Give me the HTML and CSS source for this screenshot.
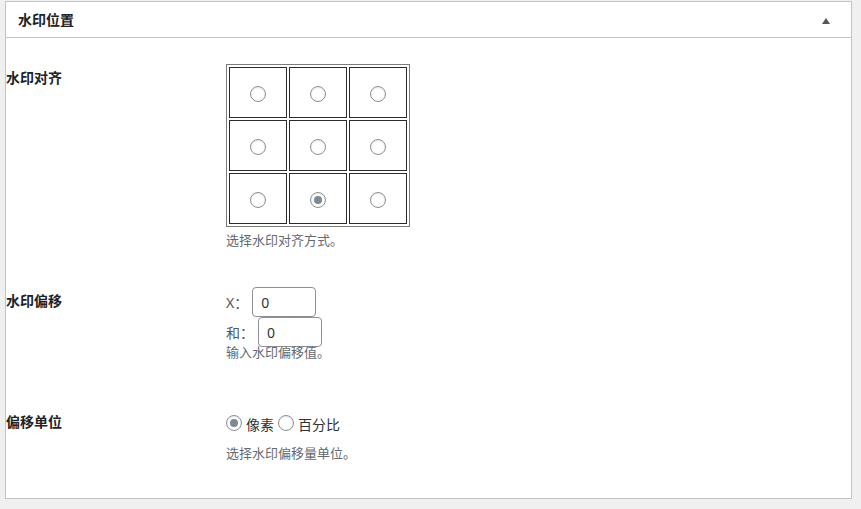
FILE: index.html
```html
<!DOCTYPE html>
<html>
    <head>
        <title>水印位置</title>
        <meta charset="utf-8">
        <link rel="stylesheet" href="styles.css">
    </head>

    <body>
        <div class="postbox">
            <div class="postbox-header">
                <h2 class="postbox-title">水印位置</h2>
                <span class="toggle-arrow"></span>
            </div>

            <div class="inside">
                <div class="form-row row-align">
                    <div class="form-label">水印对齐</div>
                    <div class="form-field">
                        <table class="align-grid">
                            <tr>
                                <td><input type="radio" name="position" class="radio"></td>
                                <td><input type="radio" name="position" class="radio"></td>
                                <td><input type="radio" name="position" class="radio"></td>
                            </tr>
                            <tr>
                                <td><input type="radio" name="position" class="radio"></td>
                                <td><input type="radio" name="position" class="radio"></td>
                                <td><input type="radio" name="position" class="radio"></td>
                            </tr>
                            <tr>
                                <td><input type="radio" name="position" class="radio"></td>
                                <td><input type="radio" name="position" class="radio" checked></td>
                                <td><input type="radio" name="position" class="radio"></td>
                            </tr>
                        </table>
                        <p class="description">选择水印对齐方式。</p>
                    </div>
                </div>

                <div class="form-row row-offset">
                    <div class="form-label">水印偏移</div>
                    <div class="form-field">
                        <label class="offset-line">X：<input type="text" class="small-input" value="0"></label>
                        <label class="offset-line">和：<input type="text" class="small-input" value="0"></label>
                        <p class="description offset-description">输入水印偏移值。</p>
                    </div>
                </div>

                <div class="form-row row-unit">
                    <div class="form-label">偏移单位</div>
                    <div class="form-field">
                        <div class="unit-line">
                            <label class="unit-option"><input type="radio" name="unit" class="radio" checked>像素</label>
                            <label class="unit-option"><input type="radio" name="unit" class="radio">百分比</label>
                        </div>
                        <p class="description unit-description">选择水印偏移量单位。</p>
                    </div>
                </div>
            </div>
        </div>
    </body>
</html>
```

FILE: styles.css
```css
body{
    margin:0;
    background-color:#f0f0f1;
    font-family:"Noto Sans", "Noto Sans CJK SC", sans-serif;
    font-size:14px;
    color:#3c434a;
}

.postbox{
    box-sizing:border-box;
    width:847px;
    margin:1px 0 0 5px;
    background-color:white;
    border:1px solid #c3c4c7;
    box-shadow:0 1px 1px rgba(0, 0, 0, 0.04);
}

.postbox-header{
    display:flex;
    align-items:center;
    justify-content:space-between;
    height:36px;
    padding:1px 21px 0 12px;
    box-sizing:border-box;
    border-bottom:1px solid #c3c4c7;
}

.postbox-title{
    margin:0;
    font-size:14px;
    font-weight:bold;
    line-height:18px;
    color:#1d2327;
}

.toggle-arrow{
    width:0;
    height:0;
    border-left:4px solid transparent;
    border-right:4px solid transparent;
    border-bottom:6px solid #50575e;
    margin-top:1px;
}

.inside{
    padding-top:11px;
}

.form-row{
    display:grid;
    grid-template-columns:220px 1fr;
}

.form-label{
    padding:20px 0 0 0;
    font-weight:bold;
    line-height:18px;
    color:#1d2327;
}

.form-field{
    padding-top:15px;
}

.row-align .form-field{
    padding-bottom:22px;
}
.row-offset .form-field{
    padding-bottom:31px;
}
.row-unit .form-field{
    padding-bottom:35px;
}

.description{
    margin:4px 0 0 0;
    font-size:13px;
    line-height:19px;
    color:#646970;
}
.offset-description{
    margin-top:-4px;
}

.align-grid{
    border:1px solid #7a7a7a;
    border-spacing:2px;
}
.align-grid td{
    width:56px;
    height:49px;
    padding:0;
    border:1px solid #2c2c2c;
    text-align:center;
    vertical-align:middle;
}

.radio{
    appearance:none;
    -webkit-appearance:none;
    box-sizing:border-box;
    width:16px;
    height:16px;
    margin:0;
    border:1px solid #8c8f94;
    border-radius:50%;
    background-color:white;
    box-shadow:inset 0 1px 2px rgba(0, 0, 0, 0.1);
    display:inline-block;
    vertical-align:middle;
    position:relative;
}
.radio:checked::before{
    content:"";
    position:absolute;
    left:3px;
    top:3px;
    width:8px;
    height:8px;
    border-radius:50%;
    background-color:#7e8993;
}

.offset-line{
    display:flex;
    align-items:center;
    gap:4px;
    height:30px;
    color:#50575e;
}

.small-input{
    box-sizing:border-box;
    width:64px;
    height:30px;
    margin:0;
    padding:0 8px;
    border:1px solid #8c8f94;
    border-radius:4px;
    font-family:inherit;
    font-size:14px;
    color:#2c3338;
}

.unit-line{
    display:flex;
    align-items:center;
    height:32px;
    gap:4px;
}
.unit-option{
    display:inline-flex;
    align-items:center;
    gap:4px;
    color:#2c3338;
}
.unit-option .radio{
    margin-top:-2px;
}
```
